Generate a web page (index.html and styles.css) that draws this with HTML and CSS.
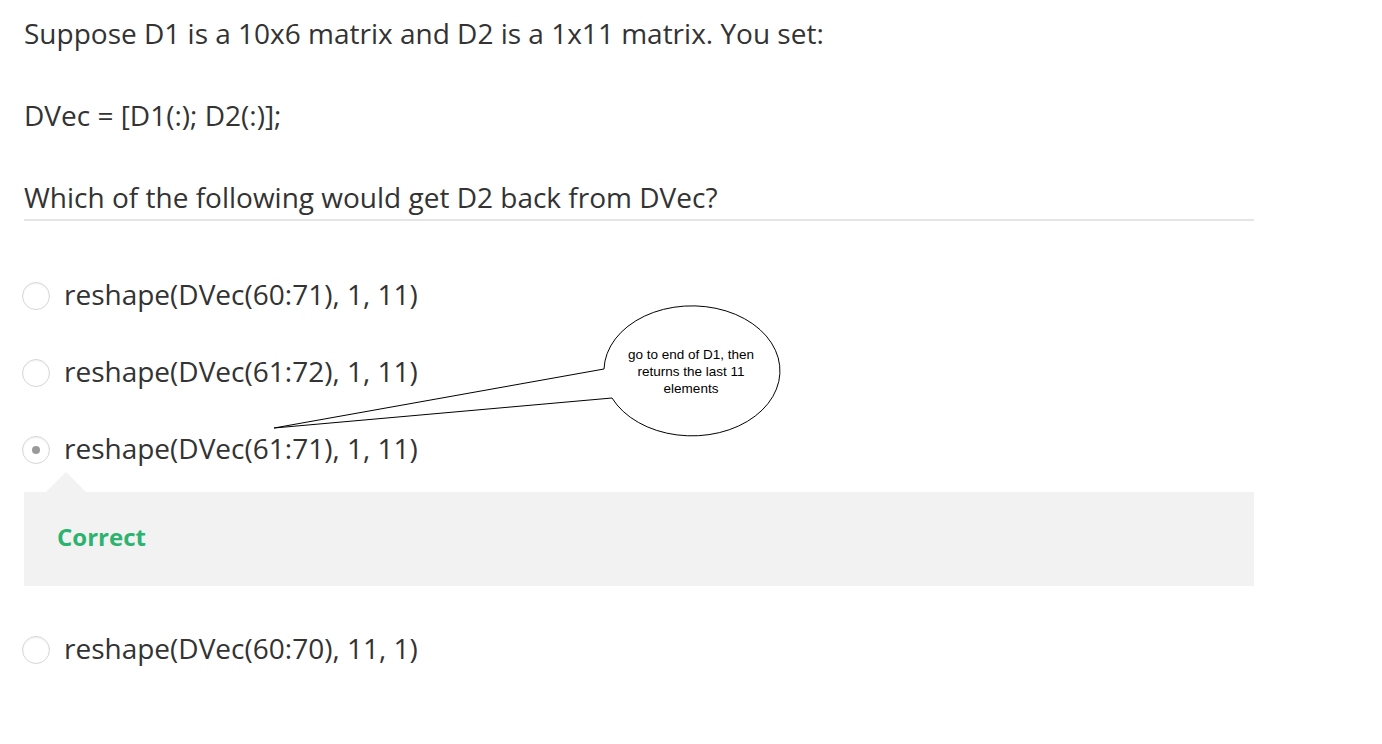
FILE: index.html
```html
<!DOCTYPE html>
<html>
<head>
<meta charset="utf-8">
<link rel="stylesheet" href="styles.css">
</head>
<body>
<div class="page">
  <div class="question">
    <p>Suppose D1 is a 10x6 matrix and D2 is a 1x11 matrix. You set:</p>
    <p>DVec = [D1(:); D2(:)];</p>
    <p>Which of the following would get D2 back from DVec?</p>
  </div>
  <div class="options">
    <div class="option"><span class="radio"></span><span class="label">reshape(DVec(60:71), 1, 11)</span></div>
    <div class="option"><span class="radio"></span><span class="label">reshape(DVec(61:72), 1, 11)</span></div>
    <div class="option"><span class="radio checked"></span><span class="label">reshape(DVec(61:71), 1, 11)</span></div>
    <div class="feedback"><span class="correct">Correct</span></div>
    <div class="option last"><span class="radio"></span><span class="label">reshape(DVec(60:70), 11, 1)</span></div>
  </div>
  <div class="annotation">
    <svg class="bubble" width="1382" height="744" viewBox="0 0 1382 744">
      <path d="M604 369 L274 428 L612 398 A88 65 0 1 0 604 369" fill="#fff" stroke="#000" stroke-width="1"/>
    </svg>
    <div class="bubble-text">go to end of D1, then<br>returns the last 11<br>elements</div>
  </div>
</div>
</body>
</html>
```
FILE: styles.css
```css
html, body {
  margin: 0;
  padding: 0;
  background: #fff;
}
.page {
  position: relative;
  width: 1382px;
  height: 744px;
  overflow: hidden;
  font-family: "Open Sans", "Liberation Sans", sans-serif;
  color: #333;
}
.question {
  margin-left: 24px;
  width: 1230px;
  padding-top: 15px;
  padding-bottom: 4px;
  border-bottom: 2px solid #e5e5e5;
}
.question p {
  margin: 0;
  font-size: 28px;
  line-height: 36px;
}
.question p + p {
  margin-top: 46px;
}
.options {
  margin-left: 24px;
  width: 1230px;
  padding-top: 57px;
  display: flex;
  flex-direction: column;
}
.option {
  display: flex;
  align-items: center;
  height: 36px;
  margin-bottom: 41px;
}
.option.last {
  margin-bottom: 0;
}
.radio {
  box-sizing: border-box;
  width: 28px;
  height: 28px;
  border-radius: 50%;
  border: 1px solid #d6d6d6;
  box-shadow: inset 0 1px 2px rgba(0,0,0,0.06);
  background: #fff;
  margin-left: -2px;
  margin-right: 14px;
  flex: none;
  display: flex;
  align-items: center;
  justify-content: center;
}
.radio.checked::after {
  content: "";
  width: 8px;
  height: 8px;
  border-radius: 50%;
  background: #9a9a9a;
}
.label {
  font-size: 28px;
  line-height: 36px;
  padding-bottom: 4px;
  color: #333;
}
.option:nth-child(3) {
  margin-bottom: 24px;
}
.feedback {
  position: relative;
  box-sizing: border-box;
  background: #f2f2f2;
  height: 94px;
  display: flex;
  align-items: center;
  padding-left: 33px;
  padding-bottom: 5px;
  margin-bottom: 46px;
}
.feedback::before {
  content: "";
  position: absolute;
  left: 22px;
  top: -20px;
  border-left: 20px solid transparent;
  border-right: 20px solid transparent;
  border-bottom: 20px solid #f2f2f2;
}
.correct {
  color: #2bb36f;
  font-weight: 700;
  font-size: 24px;
}
.annotation {
  position: absolute;
  left: 0;
  top: 0;
  width: 1382px;
  height: 744px;
  pointer-events: none;
}
.bubble {
  position: absolute;
  left: 0;
  top: 0;
}
.bubble-text {
  position: absolute;
  left: 601px;
  top: 346px;
  width: 180px;
  text-align: center;
  font-family: "Liberation Sans", Arial, sans-serif;
  font-size: 13.5px;
  line-height: 17px;
  color: #000;
}
```
